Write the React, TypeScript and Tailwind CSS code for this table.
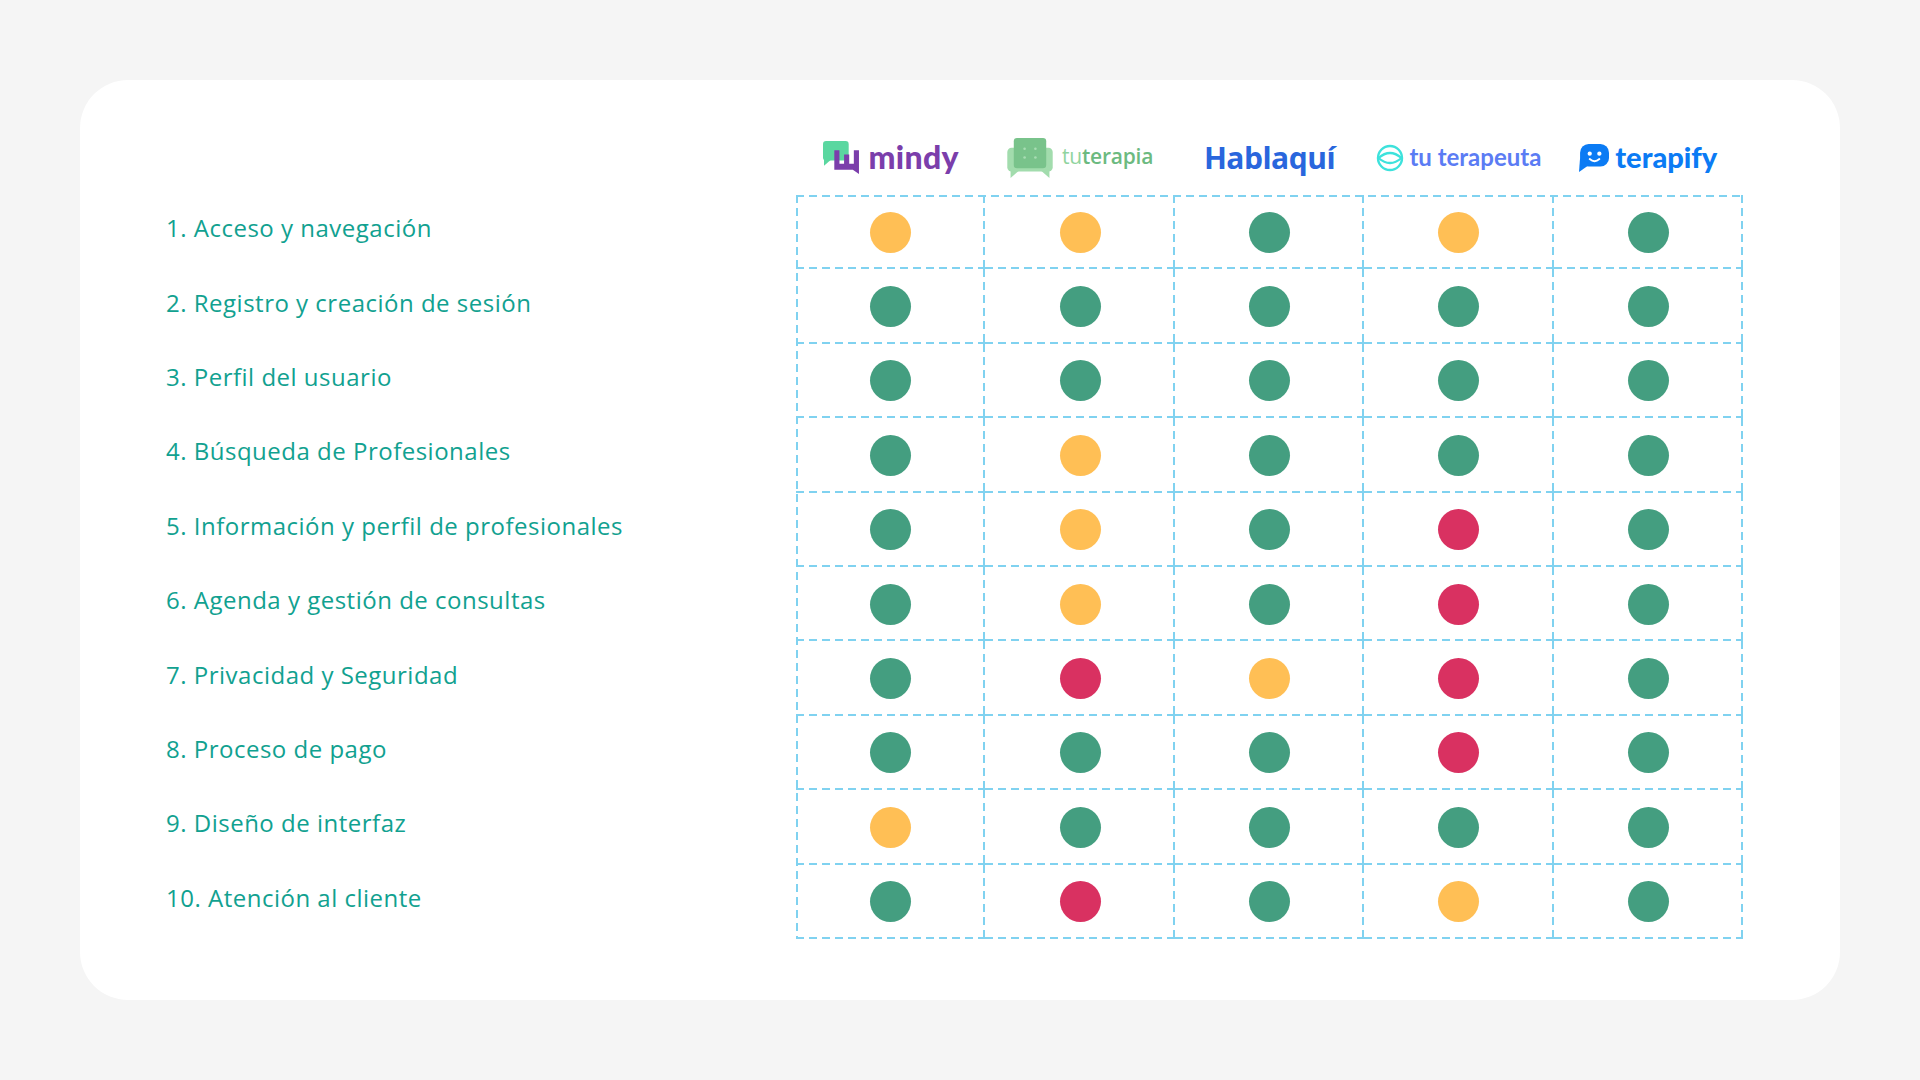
import React from "react"

type Mark = "g" | "o" | "r"

const rows: { label: string; marks: Mark[] }[] = [
  { label: "1. Acceso y navegación", marks: ["o", "o", "g", "o", "g"] },
  { label: "2. Registro y creación de sesión", marks: ["g", "g", "g", "g", "g"] },
  { label: "3. Perfil del usuario", marks: ["g", "g", "g", "g", "g"] },
  { label: "4. Búsqueda de Profesionales", marks: ["g", "o", "g", "g", "g"] },
  { label: "5. Información y perfil de profesionales", marks: ["g", "o", "g", "r", "g"] },
  { label: "6. Agenda y gestión de consultas", marks: ["g", "o", "g", "r", "g"] },
  { label: "7. Privacidad y Seguridad", marks: ["g", "r", "o", "r", "g"] },
  { label: "8. Proceso de pago", marks: ["g", "g", "g", "r", "g"] },
  { label: "9. Diseño de interfaz", marks: ["o", "g", "g", "g", "g"] },
  { label: "10. Atención al cliente", marks: ["g", "r", "g", "o", "g"] },
]

const dotColor: Record<Mark, string> = {
  g: "bg-[#449e80]",
  o: "bg-[#ffbf55]",
  r: "bg-[#d93161]",
}

function MindyLogo() {
  return (
    <div className="flex items-center gap-[9px]">
      <svg width="37" height="33" viewBox="0 0 36 32">
        <rect x="0" y="0" width="25" height="19" rx="3" fill="#5ad7a0" />
        <polygon points="1,16 1,24 8,18" fill="#5ad7a0" />
        <path d="M11 9H16V22H20.5V13H25.5V22H30V9H35V32L29 28H11Z" fill="#7b3eab" />
      </svg>
      <span className="font-['Lato',sans-serif] font-black text-[32px] leading-none text-[#7b3eab] tracking-[0.3px] pb-[2px]">
        mindy
      </span>
    </div>
  )
}

function TuterapiaLogo() {
  return (
    <div className="flex items-center gap-[9px]">
      <svg width="46" height="40" viewBox="0 0 42 37">
        <rect x="0" y="9" width="42" height="22" rx="4" fill="#a2dcad" />
        <polygon points="3,29 3,37 11,30" fill="#a2dcad" />
        <polygon points="31,30 39,37 39,29" fill="#a2dcad" />
        <rect x="6" y="0" width="30" height="28" rx="3" fill="#79c38b" />
        <circle cx="16" cy="10" r="1.2" fill="#a8ddb3" />
        <circle cx="26" cy="10" r="1.2" fill="#a8ddb3" />
        <circle cx="16" cy="18" r="1.2" fill="#a8ddb3" />
        <circle cx="26" cy="18" r="1.2" fill="#a8ddb3" />
      </svg>
      <span className="font-['Open_Sans',sans-serif] text-[21px] leading-none pb-[2px] tracking-[-0.2px]">
        <span className="text-[#90d49e] font-normal">tu</span>
        <span className="text-[#6cba80] font-semibold">terapia</span>
      </span>
    </div>
  )
}

function HablaquiLogo() {
  return (
    <span className="font-['Open_Sans',sans-serif] font-bold text-[30px] leading-none text-[#2966dd] tracking-[-0.5px]">
      Hablaquí
    </span>
  )
}

function TuterapeutaLogo() {
  return (
    <div className="flex items-center gap-[5px]">
      <svg width="28" height="28" viewBox="0 0 28 28">
        <circle cx="14" cy="14" r="12" fill="none" stroke="#3de2dc" strokeWidth="2.4" />
        <path d="M2.5 14Q14 4 25.5 14" fill="none" stroke="#3de2dc" strokeWidth="2.2" />
        <path d="M2.5 14Q14 24 25.5 14" fill="none" stroke="#3de2dc" strokeWidth="2.2" />
      </svg>
      <span className="font-['Lato',sans-serif] font-bold text-[24px] leading-none text-[#5b7cf4] pb-[2px]">
        tu terapeuta
      </span>
    </div>
  )
}

function TerapifyLogo() {
  return (
    <div className="flex items-center gap-[6px]">
      <svg width="30" height="28" viewBox="0 0 28 26">
        <rect x="1" y="0" width="27" height="21" rx="8" fill="#0b7bf4" />
        <polygon points="1,13 0,26 10,19" fill="#0b7bf4" />
        <circle cx="10" cy="9" r="2" fill="#fff" />
        <circle cx="19" cy="9" r="2" fill="#fff" />
        <path d="M10 14Q14.5 18 19 14" fill="none" stroke="#fff" strokeWidth="1.8" strokeLinecap="round" />
      </svg>
      <span className="font-['Lato',sans-serif] font-black text-[29px] leading-none text-[#0b7bf4] pb-[3px]">
        terapify
      </span>
    </div>
  )
}

export default function App() {
  return (
    <div className="min-h-screen w-full bg-[#f5f5f5] p-[80px]">
      <div className="w-[1760px] h-[920px] bg-white rounded-[48px] pl-[86px] pr-[97px] pt-[40px]">
        {/* header with logos */}
        <div className="flex h-[75px]">
          <div className="w-[630px]" />
          <div className="flex-1 grid grid-cols-5 items-center">
            <div className="flex justify-center"><MindyLogo /></div>
            <div className="flex justify-center"><TuterapiaLogo /></div>
            <div className="flex justify-center"><HablaquiLogo /></div>
            <div className="flex justify-center"><TuterapeutaLogo /></div>
            <div className="flex justify-center"><TerapifyLogo /></div>
          </div>
        </div>

        <div className="flex">
          <div className="w-[630px] flex flex-col">
            {rows.map((row) => (
              <div
                key={row.label}
                className="h-[74.4px] flex items-center pb-[8px] font-['Open_Sans',sans-serif] font-medium text-[24px] tracking-[0.5px] text-[#11a190]"
              >
                {row.label}
              </div>
            ))}
          </div>

          <div className="flex-1 grid grid-cols-5 bg-[image:repeating-linear-gradient(90deg,#80d2f0_0_8px,transparent_8px_13px),repeating-linear-gradient(180deg,#80d2f0_0_8px,transparent_8px_13px)] bg-[length:100%_2px,2px_100%] bg-no-repeat">
            {rows.map((row) =>
              row.marks.map((m, i) => (
                <div
                  key={row.label + i}
                  className="h-[74.4px] flex items-center justify-center bg-[image:repeating-linear-gradient(90deg,#80d2f0_0_8px,transparent_8px_13px),repeating-linear-gradient(180deg,#80d2f0_0_8px,transparent_8px_13px)] bg-[length:100%_2px,2px_100%] bg-[position:0_100%,100%_0] bg-no-repeat"
                >
                  <div className={`w-[41px] h-[41px] rounded-full ${dotColor[m]}`} />
                </div>
              )),
            )}
          </div>
        </div>
      </div>
    </div>
  )
}
